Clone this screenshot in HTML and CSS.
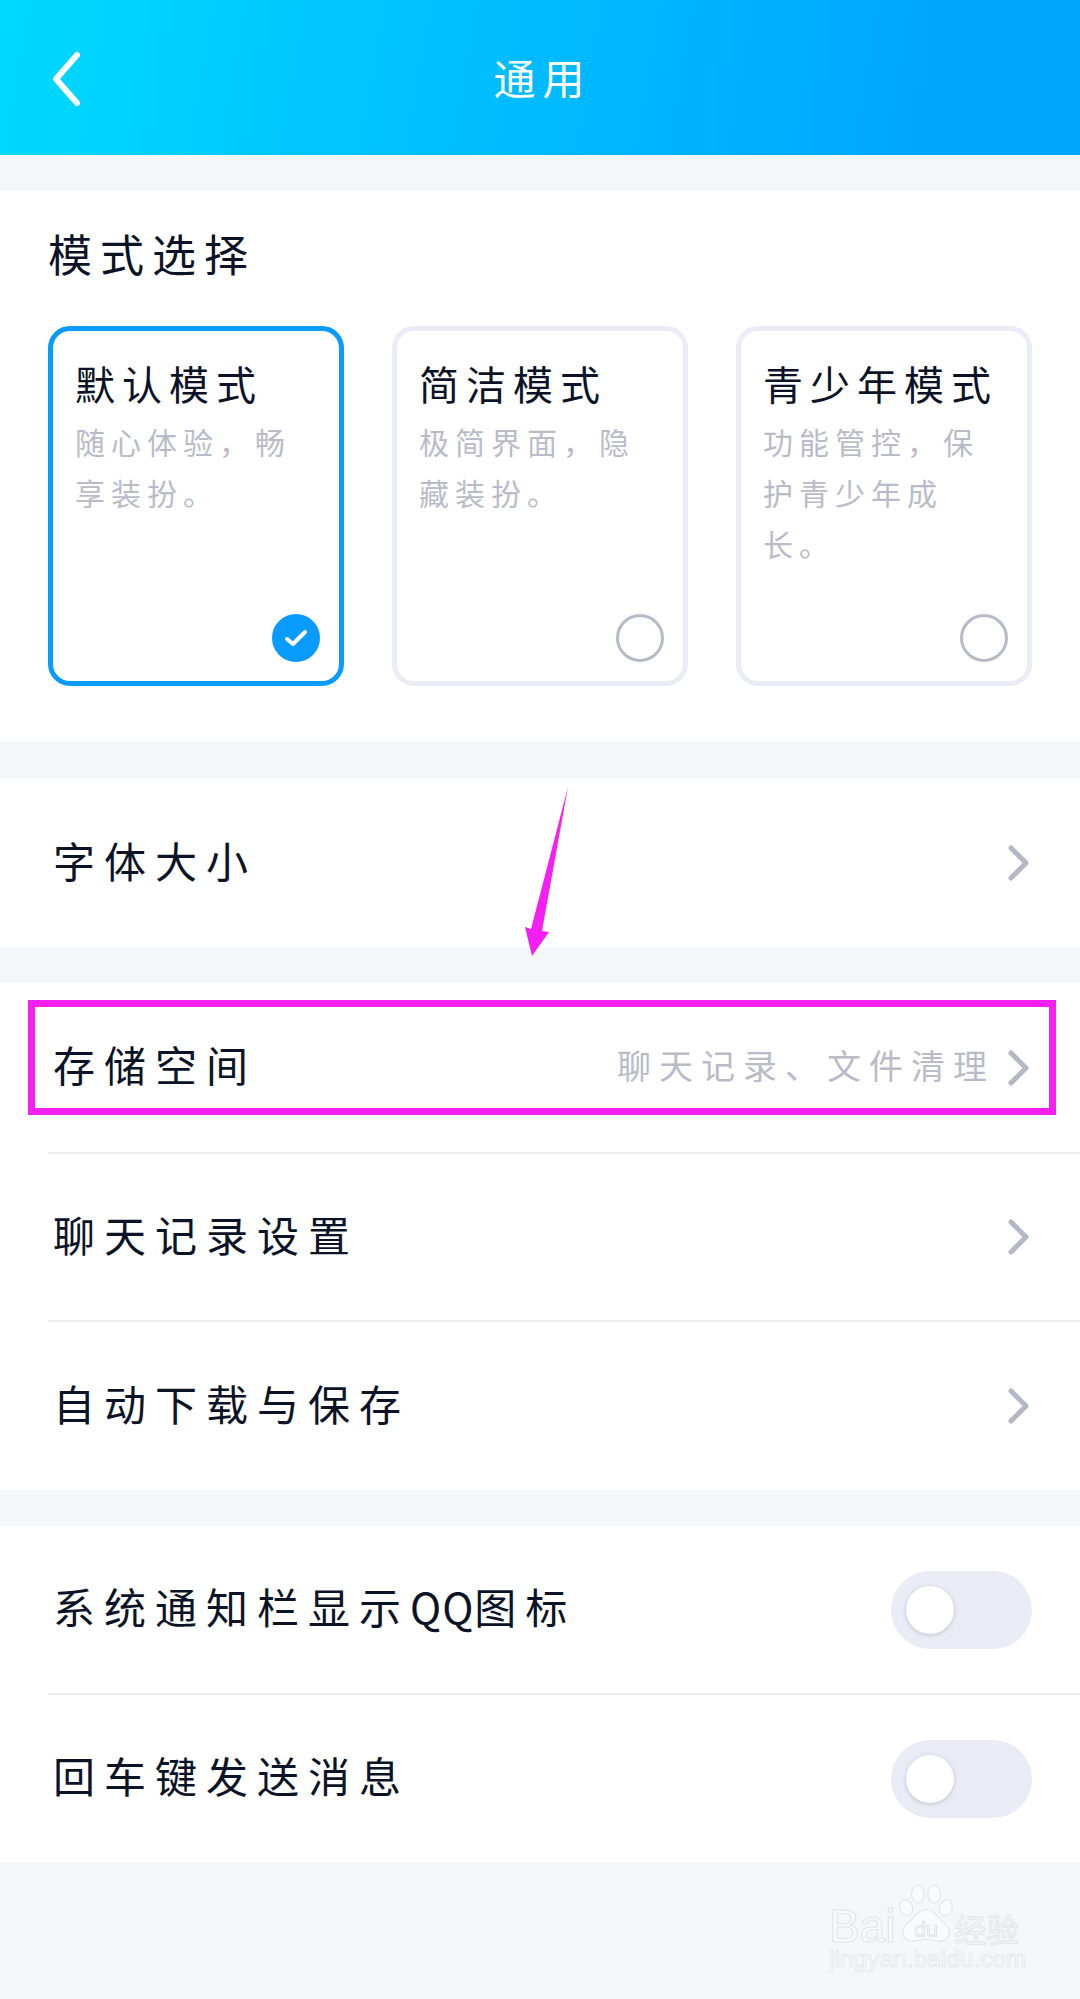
FILE: index.html
```html
<!DOCTYPE html>
<html lang="zh-CN">
<head>
    <meta charset="UTF-8">
    <meta name="viewport" content="width=device-width, initial-scale=1.0">
    <title>通用</title>
    <link rel="stylesheet" href="styles.css">
</head>
<body>
<div class="page">
    <header class="topbar">
        <svg class="back-icon" width="32" height="58" viewBox="0 0 32 58">
            <path d="M27 5 L6 29 L27 53" fill="none" stroke="#fff" stroke-width="6" stroke-linecap="round" stroke-linejoin="round"/>
        </svg>
        <h1>通用</h1>
    </header>

    <section class="panel modes">
        <h2>模式选择</h2>
        <div class="mode-cards">
            <div class="mode-card selected">
                <h3>默认模式</h3>
                <p>随心体验，畅享装扮。</p>
                <span class="radio">
                    <svg width="24" height="20" viewBox="0 0 24 20">
                        <path d="M3 11 L9 16 L21 4" fill="none" stroke="#fff" stroke-width="4" stroke-linecap="round" stroke-linejoin="round"/>
                    </svg>
                </span>
            </div>
            <div class="mode-card">
                <h3>简洁模式</h3>
                <p>极简界面，隐藏装扮。</p>
                <span class="radio"></span>
            </div>
            <div class="mode-card">
                <h3>青少年模式</h3>
                <p>功能管控，保护青少年成长。</p>
                <span class="radio"></span>
            </div>
        </div>
    </section>

    <section class="panel single">
        <div class="row">
            <span class="row-label">字体大小</span>
            <svg class="chevron" width="22" height="36" viewBox="0 0 22 36"><path d="M3 3 L18 18 L3 33" /></svg>
        </div>
    </section>

    <section class="panel list">
        <div class="row">
            <span class="row-label">存储空间</span>
            <span class="row-note">聊天记录、文件清理</span>
            <svg class="chevron" width="22" height="36" viewBox="0 0 22 36"><path d="M3 3 L18 18 L3 33" /></svg>
        </div>
        <div class="row">
            <span class="row-label">聊天记录设置</span>
            <svg class="chevron" width="22" height="36" viewBox="0 0 22 36"><path d="M3 3 L18 18 L3 33" /></svg>
        </div>
        <div class="row">
            <span class="row-label">自动下载与保存</span>
            <svg class="chevron" width="22" height="36" viewBox="0 0 22 36"><path d="M3 3 L18 18 L3 33" /></svg>
        </div>
        <div class="highlight-box"></div>
    </section>

    <section class="panel toggles">
        <div class="row">
            <span class="row-label">系统通知栏显示</span>
            <span class="row-label tight">QQ</span>
            <span class="row-label">图标</span>
            <span class="switch"><span class="knob"></span></span>
        </div>
        <div class="row">
            <span class="row-label">回车键发送消息</span>
            <span class="switch"><span class="knob"></span></span>
        </div>
    </section>

    <!-- annotation arrow drawn on top of the screenshot -->
    <svg class="arrow" width="60" height="180" viewBox="0 0 60 180">
        <path d="M48 2 L22 146 L29 147 L12 171 L5 142 L11 144 Z" fill="#f41ff0"/>
    </svg>

    <div class="watermark">
        <div class="wm-logo">
            <span class="wm-latin">Bai</span>
            <svg class="wm-paw" width="56" height="60" viewBox="0 0 62 66">
                <g fill="#f9fafc" stroke="#e2e3e8" stroke-width="1.2">
                    <ellipse cx="9" cy="26" rx="7" ry="9" transform="rotate(-20 9 26)"/>
                    <ellipse cx="22" cy="11" rx="7" ry="10"/>
                    <ellipse cx="40" cy="11" rx="7" ry="10"/>
                    <ellipse cx="53" cy="26" rx="7" ry="9" transform="rotate(20 53 26)"/>
                    <path d="M31 28 C41 28 44 38 52 44 C60 51 57 63 46 63 C39 63 36 61 31 61 C26 61 23 63 16 63 C5 63 2 51 10 44 C18 38 21 28 31 28 Z"/>
                </g>
                <text x="31" y="58" text-anchor="middle" class="wm-du">du</text>
            </svg>
            <span class="wm-cjk">经验</span>
        </div>
        <div class="wm-url">jingyan.baidu.com</div>
    </div>
</div>
</body>
</html>
```

FILE: styles.css
```css
* {
    box-sizing: border-box;
}

body {
    margin: 0;
    background-color: #f4f6fa;
    font-family: "Noto Sans CJK SC", "Noto Sans", sans-serif;
    color: #0d1326;
}

.page {
    position: relative;
    width: 1080px;
    height: 1999px;
    overflow: hidden;
}

.topbar {
    position: relative;
    height: 155px;
    display: flex;
    align-items: center;
    justify-content: center;
    background: linear-gradient(100deg, #00d9ff 0%, #00a6ff 85%);
}

.topbar h1 {
    margin: 0 0 2px 5px;
    font-size: 42px;
    font-weight: 400;
    letter-spacing: 7px;
    color: #fff;
}

.back-icon {
    position: absolute;
    left: 50px;
    top: 50px;
}

.panel {
    background-color: #fff;
}

.modes {
    height: 550px;
    margin-top: 36px;
    padding: 0 48px;
}

.modes h2 {
    margin: 0;
    padding-top: 30px;
    height: 135px;
    font-size: 44px;
    line-height: 64px;
    font-weight: 400;
    letter-spacing: 8px;
}

.mode-cards {
    display: flex;
    gap: 48px;
}

.mode-card {
    width: 296px;
    height: 360px;
    padding: 19px 19px 19px 22px;
    display: flex;
    flex-direction: column;
    border: 5px solid #e9ecf4;
    border-radius: 22px;
}

.mode-card.selected {
    border-color: #0a9bff;
}

.mode-card h3 {
    margin: 0;
    font-size: 40px;
    line-height: 66px;
    font-weight: 400;
    letter-spacing: 7px;
    white-space: nowrap;
}

.mode-card p {
    margin: 0;
    font-size: 30px;
    line-height: 51px;
    letter-spacing: 6px;
    color: #b9bcc8;
}

.radio {
    width: 48px;
    height: 48px;
    margin-top: auto;
    align-self: flex-end;
    display: flex;
    align-items: center;
    justify-content: center;
    border: 3px solid #b8bbc7;
    border-radius: 50%;
}

.selected .radio {
    background-color: #0a9bff;
    border-color: #0a9bff;
}

.single {
    margin-top: 38px;
}

.row {
    height: 168px;
    margin-left: 48px;
    padding: 0 50px 0 5px;
    display: flex;
    align-items: center;
}

.row + .row {
    border-top: 2px solid #eceef3;
}

.row-label {
    padding-bottom: 8px;
    font-size: 42px;
    letter-spacing: 9px;
    white-space: nowrap;
}

.row-label.tight {
    letter-spacing: 1px;
}

.row-note {
    margin-left: auto;
    padding-bottom: 6px;
    font-size: 34px;
    letter-spacing: 8px;
    color: #b9bcc8;
}

.chevron {
    flex: none;
    margin-left: auto;
}

.row-note + .chevron {
    margin-left: 13px;
}

.chevron path {
    fill: none;
    stroke: #b4b7c4;
    stroke-width: 5;
    stroke-linecap: round;
    stroke-linejoin: round;
}

.list {
    position: relative;
    margin-top: 36px;
}

.list .row {
    height: 169px;
}

.list .row:nth-child(2) {
    height: 168px;
}

.list .row:nth-child(3) {
    height: 170px;
}

.highlight-box {
    position: absolute;
    left: 28px;
    top: 17px;
    width: 1028px;
    height: 115px;
    border: 7px solid #f41ff0;
}

.toggles {
    margin-top: 36px;
}

.toggles .row {
    height: 167px;
    padding-right: 48px;
}

.toggles .row + .row {
    height: 169px;
}

.switch {
    width: 141px;
    height: 78px;
    margin-left: auto;
    padding: 15px;
    border-radius: 39px;
    background-color: #e9ecf4;
}

.knob {
    display: block;
    width: 48px;
    height: 48px;
    border-radius: 50%;
    background-color: #fff;
    box-shadow: 0 1px 4px rgba(90, 95, 115, 0.3);
}

.arrow {
    position: absolute;
    left: 520px;
    top: 785px;
}

.watermark {
    position: absolute;
    left: 829px;
    top: 1882px;
    width: 195px;
}

.wm-logo {
    display: flex;
    align-items: flex-end;
    height: 62px;
}

.wm-latin {
    font-family: "Liberation Sans", sans-serif;
    font-size: 46px;
    line-height: 36px;
    color: #f9fafc;
    -webkit-text-stroke: 1px #e2e3e8;
}

.wm-paw {
    flex: none;
    margin-left: 3px;
}

.wm-du {
    font-family: "Liberation Sans", sans-serif;
    font-size: 24px;
    fill: #f9fafc;
    stroke: #d9dae0;
    stroke-width: 0.8;
}

.wm-cjk {
    font-size: 32px;
    line-height: 32px;
    color: #f9fafc;
    -webkit-text-stroke: 1px #e2e3e8;
    white-space: nowrap;
}

.wm-url {
    margin-top: 1px;
    font-family: "Liberation Sans", sans-serif;
    font-size: 24.5px;
    line-height: 28px;
    color: #f9fafc;
    -webkit-text-stroke: 0.7px #e2e3e8;
}
```
